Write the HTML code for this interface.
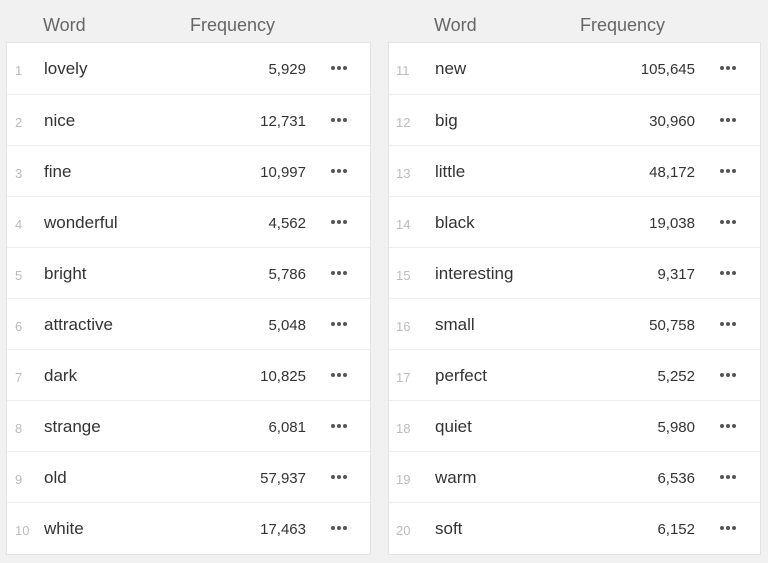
<!DOCTYPE html><html><head><style>
body{margin:0;width:768px;height:563px;background:#f1f1f1;font-family:"Liberation Sans",sans-serif;position:relative;overflow:hidden}
.h{position:absolute;top:15px;font-size:18px;color:#666}
.p{position:absolute;top:42px;background:#fff;border:1px solid #e3e3e3;box-sizing:border-box;height:513px}
.r{position:absolute;left:0;right:0;height:51px;border-top:1px solid #eee;box-sizing:border-box}
.r:first-child{border-top:none}
.r span{position:absolute;top:16px;line-height:20px}
.i{font-size:13px;color:#bbb}
.w{font-size:17px;color:#333}
.f{font-size:15px;color:#333;text-align:right}
.r svg{position:absolute;top:23px}
</style></head><body>
<div class="h" style="left:43px">Word</div><div class="h" style="left:190px">Frequency</div>
<div class="h" style="left:434px">Word</div><div class="h" style="left:580px">Frequency</div>
<div class="p" style="left:6px;width:365px" id="a"></div>
<div class="p" style="left:388px;width:373px" id="b"></div>
<script>
var L=[["lovely","5,929"],["nice","12,731"],["fine","10,997"],["wonderful","4,562"],["bright","5,786"],["attractive","5,048"],["dark","10,825"],["strange","6,081"],["old","57,937"],["white","17,463"]];
var R=[["new","105,645"],["big","30,960"],["little","48,172"],["black","19,038"],["interesting","9,317"],["small","50,758"],["perfect","5,252"],["quiet","5,980"],["warm","6,536"],["soft","6,152"]];
var dots='<circle cx="2" cy="2" r="2"/><circle cx="8" cy="2" r="2"/><circle cx="14" cy="2" r="2"/>';
function f(id,d,o,ix,wx,fr,dx){var h="";d.forEach(function(e,k){h+='<div class="r" style="top:'+(k*51)+'px"><span class="i" style="left:'+ix+'px;top:18px">'+(k+o)+'</span><span class="w" style="left:'+wx+'px">'+e[0]+'</span><span class="f" style="right:'+fr+'px;top:17px">'+e[1]+'</span><svg width="16" height="4" fill="#555" style="left:'+dx+'px">'+dots+'</svg></div>'});document.getElementById(id).innerHTML=h}
f("a",L,1,8,37,64,324);
f("b",R,11,7,46,65,331);
</script>
</body></html>
